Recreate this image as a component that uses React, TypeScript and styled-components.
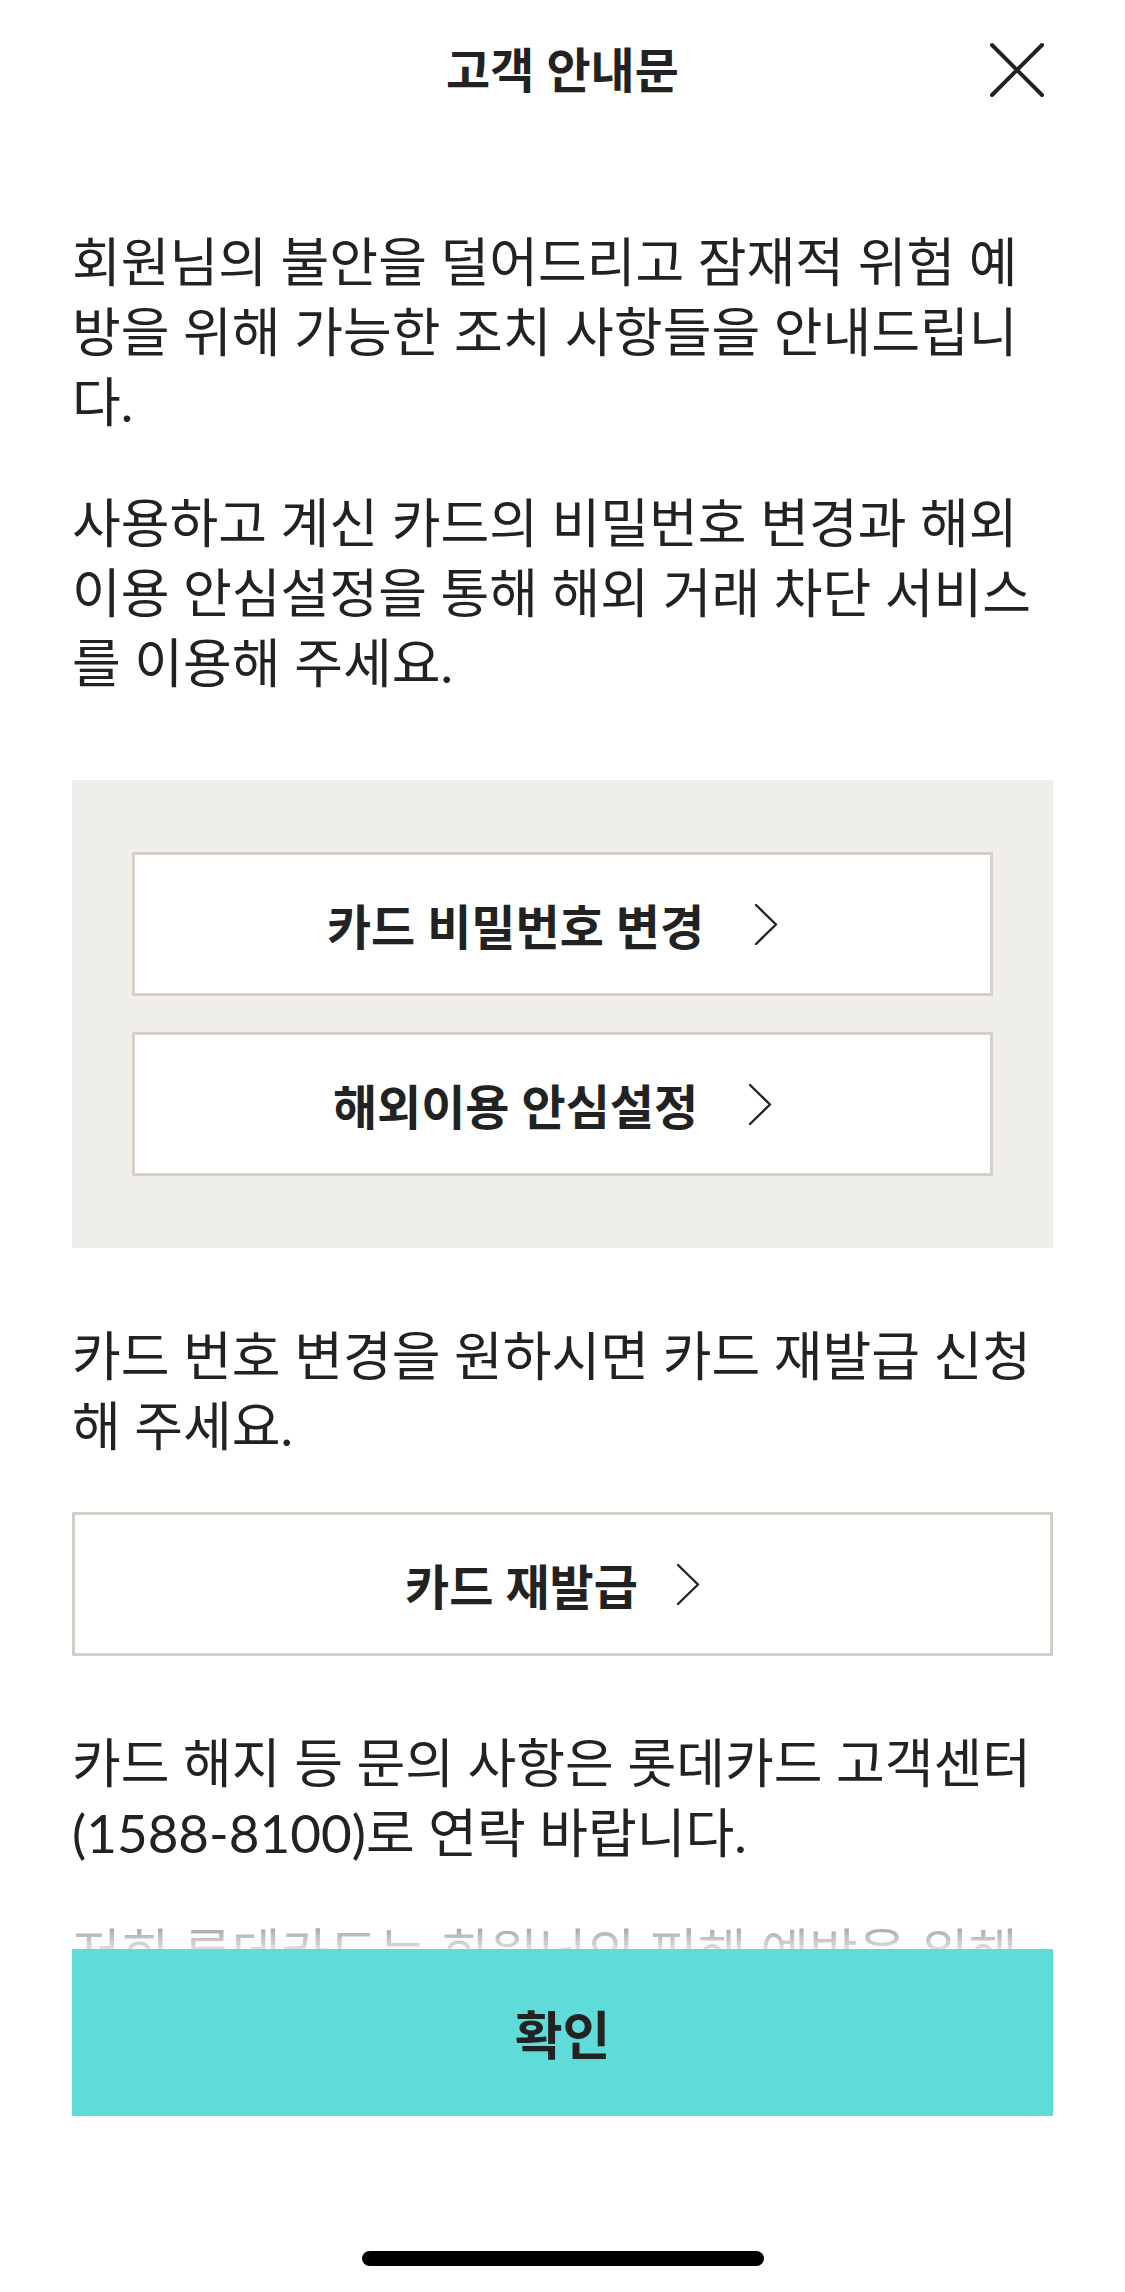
import React from "react";
import styled, { createGlobalStyle } from "styled-components";

const GlobalStyle = createGlobalStyle`
  html, body {
    margin: 0;
    padding: 0;
    background: #ffffff;
  }
  body {
    font-family: Lato, "Noto Sans CJK KR", "Noto Sans", sans-serif;
    color: #222222;
    -webkit-font-smoothing: antialiased;
  }
  *, *::before, *::after {
    box-sizing: border-box;
  }
`;

const Screen = styled.div`
  position: relative;
  width: 100%;
  height: 100vh;
  overflow: hidden;
  background: #ffffff;
`;

const Header = styled.header`
  display: grid;
  grid-template-columns: 1fr auto 1fr;
  align-items: center;
  height: 140px;
`;

const Title = styled.h1`
  grid-column: 2;
  margin: 0;
  font-size: 48px;
  font-weight: 600;
  line-height: 1;
  color: #222222;
`;

const CloseButton = styled.button`
  grid-column: 3;
  justify-self: end;
  margin-right: 80px;
  width: 56px;
  height: 56px;
  padding: 0;
  border: 0;
  background: none;
  display: flex;
  align-items: center;
  justify-content: center;
  cursor: pointer;
`;

const Content = styled.main`
  display: flex;
  flex-direction: column;
  padding: 0 72px;
`;

const Paragraph = styled.p<{ $top: number }>`
  margin: ${(p) => p.$top}px 0 0;
  font-size: 53px;
  line-height: 70px;
  color: #222222;
  white-space: nowrap;
`;

const LinkPanel = styled.section`
  margin-top: 82px;
  background: #efeeea;
  padding: 72px 60px;
  display: flex;
  flex-direction: column;
  gap: 36px;
`;

const LinkButton = styled.button<{ $top?: number; $gap?: number }>`
  margin: ${(p) => p.$top ?? 0}px 0 0;
  height: 144px;
  width: 100%;
  background: #ffffff;
  border: 3px solid #d6cfc7;
  display: flex;
  align-items: center;
  justify-content: center;
  gap: ${(p) => p.$gap ?? 50}px;
  padding: 0 20px 0 0;
  font-family: inherit;
  font-size: 48px;
  font-weight: 600;
  color: #222222;
  cursor: pointer;
`;

const BottomBar = styled.div`
  position: absolute;
  left: 0;
  right: 0;
  bottom: 0;
  height: 343px;
  padding: 0 72px;
  background: #ffffff;

  &::before {
    content: "";
    position: absolute;
    left: 0;
    right: 0;
    bottom: 100%;
    height: 44px;
    background: linear-gradient(
      to bottom,
      rgba(255, 255, 255, 0.35),
      rgba(255, 255, 255, 0.85)
    );
  }
`;

const ConfirmButton = styled.button`
  width: 100%;
  height: 167px;
  border: 0;
  background: #5fdcd9;
  font-family: inherit;
  font-size: 52px;
  font-weight: 600;
  color: #222222;
  cursor: pointer;
`;

const HomeIndicator = styled.div`
  position: absolute;
  left: 50%;
  bottom: 26px;
  width: 402px;
  height: 15px;
  margin-left: -201px;
  border-radius: 8px;
  background: #000000;
`;

const CloseIcon = () => (
  <svg width="56" height="56" viewBox="0 0 56 56" fill="none">
    <path
      d="M3 3 L53 53 M53 3 L3 53"
      stroke="#222222"
      strokeWidth="4"
      strokeLinecap="round"
    />
  </svg>
);

const Chevron = () => (
  <svg width="24" height="41" viewBox="0 0 24 41" fill="none">
    <path
      d="M2 1 L22 20.5 L2 40"
      stroke="#222222"
      strokeWidth="2.4"
      strokeLinecap="round"
      strokeLinejoin="round"
    />
  </svg>
);

export default function App() {
  return (
    <>
      <GlobalStyle />
      <Screen>
        <Header>
          <Title>고객 안내문</Title>
          <CloseButton aria-label="닫기">
            <CloseIcon />
          </CloseButton>
        </Header>
        <Content>
          <Paragraph $top={87}>
            회원님의 불안을 덜어드리고 잠재적 위험 예<br />
            방을 위해 가능한 조치 사항들을 안내드립니
            <br />
            다.
          </Paragraph>
          <Paragraph $top={51}>
            사용하고 계신 카드의 비밀번호 변경과 해외
            <br />
            이용 안심설정을 통해 해외 거래 차단 서비스
            <br />를 이용해 주세요.
          </Paragraph>
          <LinkPanel>
            <LinkButton>
              <span>카드 비밀번호 변경</span>
              <Chevron />
            </LinkButton>
            <LinkButton>
              <span>해외이용 안심설정</span>
              <Chevron />
            </LinkButton>
          </LinkPanel>
          <Paragraph $top={73}>
            카드 번호 변경을 원하시면 카드 재발급 신청
            <br />해 주세요.
          </Paragraph>
          <LinkButton $top={51} $gap={38}>
            <span>카드 재발급</span>
            <Chevron />
          </LinkButton>
          <Paragraph $top={72}>
            카드 해지 등 문의 사항은 롯데카드 고객센터
            <br />
            (1588-8100)로 연락 바랍니다.
          </Paragraph>
          <Paragraph $top={50}>저희 롯데카드는 회원님의 피해 예방을 위해</Paragraph>
        </Content>
        <BottomBar>
          <ConfirmButton>확인</ConfirmButton>
        </BottomBar>
        <HomeIndicator />
      </Screen>
    </>
  );
}
